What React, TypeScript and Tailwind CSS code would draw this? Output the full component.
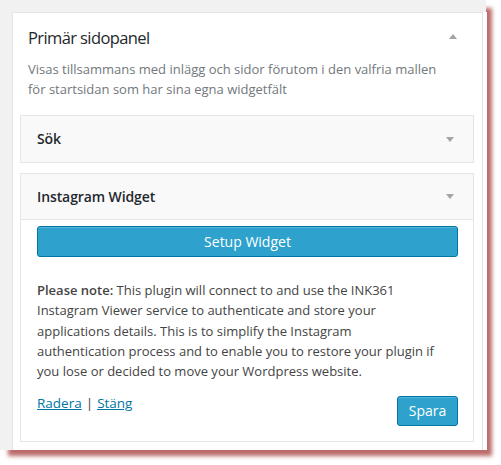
import React from "react";

const font = { fontFamily: '"Open Sans", "Noto Sans", sans-serif' };

function Arrow({ up }: { up?: boolean }) {
  return (
    <svg width="8" height="5" viewBox="0 0 8 5" className="block">
      <polygon
        points={up ? "0,5 8,5 4,0" : "0,0 8,0 4,5"}
        fill="#a0a5aa"
      />
    </svg>
  );
}

function WidgetHeader({ title, last }: { title: string; last?: boolean }) {
  return (
    <div
      className={`flex h-[46px] items-center justify-between bg-[#f9f9f9] pl-[16px] pr-[19px] ${
        last ? "border-b border-[#e5e5e5]" : ""
      }`}
    >
      <span className="text-[14px] font-semibold leading-[20px] tracking-[-0.1px] text-[#23282d]">
        {title}
      </span>
      <Arrow />
    </div>
  );
}

export default function App() {
  return (
    <div className="h-[465px] w-[501px] bg-white" style={font}>
      <div className="h-[450px] w-[486px] bg-[#f1f1f1] pl-[12px] pt-[12px] shadow-[7px_7px_4px_-1px_rgba(170,70,70,0.8)]">
        <div className="h-[438px] w-[471px] border-l border-r border-t border-[#e5e5e5] bg-white shadow-[4px_0_0_0_#fff]">
          {/* sidebar heading */}
          <div className="pl-[15px] pr-[25px] pt-[13px]">
            <div className="flex items-center justify-between">
              <h2 className="text-[16.5px] font-normal leading-[24px] tracking-[-0.6px] text-[#23282d]">
                Primär sidopanel
              </h2>
              <div className="mt-[-4px]">
                <Arrow up />
              </div>
            </div>
            <p className="mt-[9px] text-[13px] leading-[20px] text-[#72777c]">
              Visas tillsammans med inlägg och sidor förutom i den valfria mallen
              <br />
              för startsidan som har sina egna widgetfält
            </p>
          </div>

          <div className="mt-[16px] flex flex-col gap-[10px] pl-[7px]">
            <div className="w-[454px] border border-[#e5e5e5]">
              <WidgetHeader title="Sök" />
            </div>

            <div className="w-[454px] border border-[#e5e5e5] bg-white">
              <WidgetHeader title="Instagram Widget" last />
              <div className="pb-[15px] pl-[16px] pr-[15px] pt-[6px]">
                <button className="h-[31px] w-full rounded-[3px] border border-[#0074a2] bg-[#2ea2cc] text-[14px] leading-[20px] text-white shadow-[inset_0_1px_0_rgba(120,200,230,0.5)]">
                  Setup Widget
                </button>
                <p className="mt-[23px] whitespace-nowrap text-[13px] leading-[20.3px] text-[#444]">
                  <b className="font-semibold">Please note:</b> This plugin will
                  connect to and use the INK361
                  <br />
                  Instagram Viewer service to authenticate and store your
                  <br />
                  applications details. This is to simplify the Instagram
                  <br />
                  authentication process and to enable you to restore your plugin if
                  <br />
                  you lose or decided to move your Wordpress website.
                </p>
                <div className="mt-[12px] flex items-start justify-between">
                  <div className="text-[13.5px] leading-[20px] text-[#444]">
                    <a className="text-[#0074a2] underline" href="#">
                      Radera
                    </a>
                    <span className="mx-[4px]">|</span>
                    <a className="text-[#0074a2] underline" href="#">
                      Stäng
                    </a>
                  </div>
                  <button className="mt-[3px] h-[30px] w-[61px] rounded-[3px] border border-[#0074a2] bg-[#2ea2cc] text-[14px] leading-[20px] text-white shadow-[inset_0_1px_0_rgba(120,200,230,0.5)]">
                    Spara
                  </button>
                </div>
              </div>
            </div>
          </div>
        </div>
      </div>
    </div>
  );
}
